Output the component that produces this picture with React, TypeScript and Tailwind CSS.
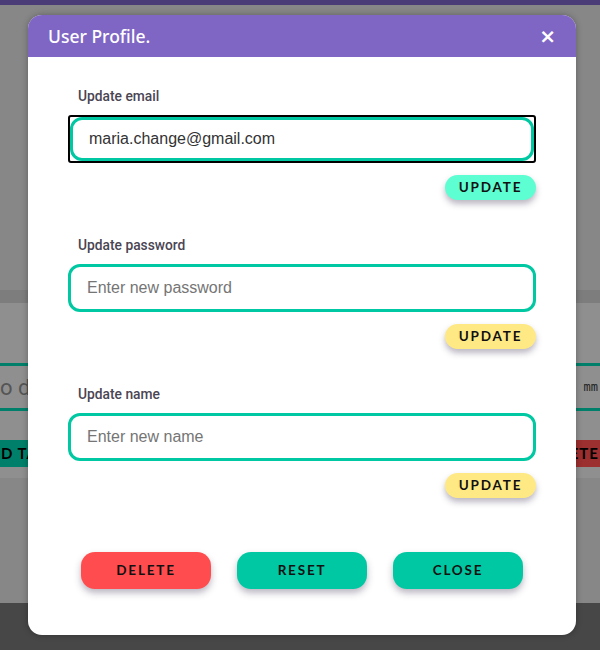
import React, { useState } from "react";

const labelFont = { fontFamily: "Roboto, 'Noto Sans', sans-serif" };
const btnFont = { fontFamily: "Lato, 'Noto Sans', sans-serif" };

const UpdateField: React.FC<{
  label: string;
  placeholder: string;
  value?: string;
  focused?: boolean;
  btnClass: string;
}> = ({ label, placeholder, value, focused, btnClass }) => {
  const [val, setVal] = useState(value || "");
  const input = (
    <input
      type="text"
      value={val}
      onChange={(e) => setVal(e.target.value)}
      placeholder={placeholder}
      className="w-full h-full border-[3px] border-[#00c8a2] rounded-[12px] pl-[16px] text-[16px] text-[#333] placeholder:text-[#757575] outline-none bg-white"
      style={{ fontFamily: "'Liberation Sans', Arial, sans-serif" }}
    />
  );
  return (
    <div className="flex flex-col">
      <span className="pl-[10px] text-[13.8px] leading-[16px] font-medium text-[#4a4553] mb-[11px]" style={labelFont}>
        {label}
      </span>
      {focused ? (
        <div className="h-[48px] border-2 border-black rounded-[3px]">{input}</div>
      ) : (
        <div className="h-[48px]">{input}</div>
      )}
      <div className="flex justify-end mt-[12px]">
        <button
          className={`w-[91px] h-[25px] rounded-full text-[13.5px] font-bold tracking-[1.8px] text-[#111] shadow-[0_4px_6px_rgba(60,50,80,0.35)] ${btnClass}`}
          style={btnFont}
        >
          UPDATE
        </button>
      </div>
    </div>
  );
};

const bigBtn =
  "w-[130px] h-[37px] rounded-[14px] text-[13.5px] font-bold tracking-[1.8px] text-[#111] shadow-[0_4px_7px_rgba(60,50,80,0.35)]";

const App: React.FC = () => {
  return (
    <div className="relative w-[600px] h-[650px] overflow-hidden flex flex-col bg-[#878787]">
      {/* page behind the overlay */}
      <div className="h-[5px] bg-[#4a3c77]" />
      <div className="flex-1 flex flex-col">
        <div className="h-[285px]" />
        <div className="h-[13px] bg-[#7d7d7d]" />
        <div className="h-[175px] bg-[#8f8f8f] flex flex-col pt-[60px]">
          <div className="h-[48px] border-y-[3px] border-[#00806a] flex items-center justify-between">
            <span className="text-[22px] text-[#555]" style={{ fontFamily: "Roboto, sans-serif" }}>
              o do
            </span>
            <span className="pr-[2px] text-[12px] text-[#222]" style={{ fontFamily: "'DejaVu Sans Mono', monospace" }}>
              <span className="text-[#4060a0]">|</span> . mm
            </span>
          </div>
          <div className="flex justify-between mt-[29px]">
            <div className="h-[27px] w-[40px] bg-[#00806a] flex items-center pl-[1px] text-[15px] font-bold text-black tracking-[1px]" style={btnFont}>
              D TA
            </div>
            <div className="h-[27px] w-[40px] bg-[#9c2f2f] flex items-center justify-end pr-[1px] text-[15px] font-bold text-black tracking-[1px]" style={btnFont}>
              ETE
            </div>
          </div>
        </div>
      </div>
      <div className="h-[47px] bg-[#474747]" />

      {/* modal */}
      <div className="absolute left-[28px] top-[15px] w-[548px] h-[620px] bg-white rounded-[14px] overflow-hidden shadow-[0_0_6px_rgba(0,0,0,0.3)] flex flex-col">
        <div className="h-[42px] bg-[#7f66c5] flex items-center justify-between pl-[20px] pr-[20px]">
          <span className="text-white text-[17.5px] font-medium" style={{ fontFamily: "'Noto Sans', Lato, sans-serif" }}>
            User Profile.
          </span>
          <span className="text-white text-[20px] font-bold leading-none" style={{ fontFamily: "'DejaVu Sans', sans-serif" }}>
            ×
          </span>
        </div>
        <div className="flex flex-col px-[40px] pt-[31px] gap-[37px]">
          <UpdateField label="Update email" placeholder="Enter new email" value="maria.change@gmail.com" focused btnClass="bg-[#5dfed2]" />
          <UpdateField label="Update password" placeholder="Enter new password" btnClass="bg-[#ffe985]" />
          <UpdateField label="Update name" placeholder="Enter new name" btnClass="bg-[#ffe985]" />
        </div>
        <div className="flex justify-center gap-[26px] mt-[54px]">
          <button className={`${bigBtn} bg-[#ff4c4e]`} style={btnFont}>
            DELETE
          </button>
          <button className={`${bigBtn} bg-[#00c8a2]`} style={btnFont}>
            RESET
          </button>
          <button className={`${bigBtn} bg-[#00c8a2]`} style={btnFont}>
            CLOSE
          </button>
        </div>
      </div>
    </div>
  );
};

export default App;
